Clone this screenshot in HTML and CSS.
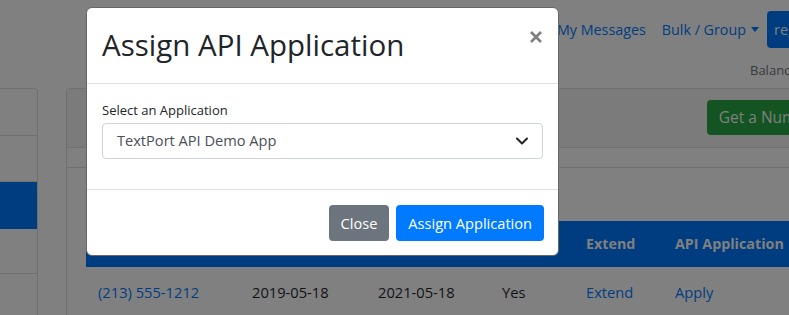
FILE: index.html
```html
<!DOCTYPE html>
<html lang="en">
<head>
    <meta charset="UTF-8">
    <meta name="viewport" content="width=device-width, initial-scale=1.0">
    <title>My Numbers - TextPort</title>
    <link rel="stylesheet" href="styles.css">
</head>
<body>

    <!-- Pagina de fondo (oscurecida mientras la ventana esta abierta) -->
    <div class="page">
        <header class="topbar">
            <nav class="nav">
                <a class="nav-link" href="#">My Messages</a>
                <a class="nav-link dropdown-toggle" href="#">Bulk / Group</a>
                <a class="btn page-primary nav-btn" href="#">register</a>
            </nav>
            <div class="balance">Balance: $25.00</div>
        </header>

        <div class="content">
            <!-- Menu lateral -->
            <div class="sidebar">
                <a class="list-item" href="#" aria-label="Account"></a>
                <a class="list-item" href="#" aria-label="Messages"></a>
                <a class="list-item active" href="#" aria-label="Numbers"></a>
                <a class="list-item" href="#" aria-label="Contacts"></a>
                <a class="list-item" href="#" aria-label="API"></a>
            </div>

            <!-- Tarjeta principal -->
            <div class="card">
                <div class="card-header">
                    <a class="btn page-success" href="#">Get a Number</a>
                </div>
                <div class="card-strip"></div>
                <div class="card-body">
                    <table class="table">
                        <thead>
                            <tr>
                                <th class="col-num">Number</th>
                                <th class="col-date">Created</th>
                                <th class="col-date2">Expires</th>
                                <th class="col-renew">Renew</th>
                                <th class="col-ext">Extend</th>
                                <th>API Application</th>
                            </tr>
                        </thead>
                        <tbody>
                            <tr>
                                <td><a href="#">(213) 555-1212</a></td>
                                <td>2019-05-18</td>
                                <td>2021-05-18</td>
                                <td>Yes</td>
                                <td><a href="#">Extend</a></td>
                                <td><a href="#">Apply</a></td>
                            </tr>
                        </tbody>
                    </table>
                </div>
            </div>
        </div>
    </div>

    <!-- Ventana de asignacion -->
    <div class="dialog-layer">
        <div class="dialog">
            <div class="dialog-header">
                <h3 class="dialog-title">Assign API Application</h3>
                <button class="close" type="button" aria-label="Close">
                    <svg width="12" height="12" viewBox="0 0 12 12">
                        <path d="M1 1 L11 11 M11 1 L1 11" stroke="#000" stroke-width="2.6" fill="none"/>
                    </svg>
                </button>
            </div>
            <div class="dialog-body">
                <label class="form-label">Select an Application</label>
                <div class="form-select">
                    <span>TextPort API Demo App</span>
                    <svg width="16" height="12" viewBox="0 0 16 12">
                        <path d="M3 3.5 L8 8.5 L13 3.5" stroke="#222" stroke-width="2" fill="none" stroke-linecap="round" stroke-linejoin="round"/>
                    </svg>
                </div>
            </div>
            <div class="dialog-footer">
                <button class="btn btn-secondary" type="button">Close</button>
                <button class="btn btn-primary" type="button">Assign Application</button>
            </div>
        </div>
    </div>

</body>
</html>
```

FILE: styles.css
```css
/* Estilos generales */
* {
    box-sizing: border-box;
}

body {
    position: relative;
    font-family: "Open Sans", "Noto Sans", sans-serif;
    font-size: 14.6px;
    line-height: 1.5;
    color: #212529;
    margin: 0;
    width: 789px;
    height: 315px;
    overflow: hidden;
}

a {
    text-decoration: none;
}

.btn {
    display: inline-block;
    border: none;
    border-radius: 4px;
    padding: 6px 12px;
    font-family: inherit;
    font-size: 14.6px;
    line-height: 24px;
    color: #fff;
    white-space: nowrap;
}

.btn-primary {
    background-color: #007bff;
}

.btn-secondary {
    background-color: #6c757d;
}

/* Pagina oscurecida detras de la ventana (colores al 50%) */
.page {
    height: 315px;
    background-color: #808080;
    color: #111315;
}

.page a {
    color: #003d80;
}

.page .btn {
    color: #808080;
}

.page-primary {
    background-color: #003d80;
}

.page-success {
    background-color: #145423;
}

/* Barra superior */
.topbar {
    height: 88px;
    padding-top: 11px;
}

.nav {
    display: flex;
    align-items: center;
    padding-left: 549px;
    white-space: nowrap;
}

.nav-link {
    padding: 0 8px;
    font-size: 14.3px;
    line-height: 24px;
}

.dropdown-toggle::after {
    content: "";
    display: inline-block;
    margin-left: 5px;
    vertical-align: 3px;
    border-top: 5px solid;
    border-left: 4px solid transparent;
    border-right: 4px solid transparent;
}

.nav-btn {
    margin-left: 0;
    height: 37px;
    padding: 6px 7px;
}

.balance {
    margin-top: 12px;
    padding-left: 750px;
    font-size: 13px;
    line-height: 21px;
    color: #363b3f;
    white-space: nowrap;
}

/* Contenido */
.content {
    display: flex;
    gap: 28px;
}

.sidebar {
    flex: 0 0 200px;
    margin-left: -162px;
    border: 1px solid #707070;
    border-radius: 4px;
    overflow: hidden;
}

.list-item {
    display: block;
    height: 47px;
    border-bottom: 1px solid #707070;
}

.list-item:nth-child(2) {
    height: 46px;
}

.list-item:nth-child(4) {
    height: 45px;
}

.page .list-item.active {
    background-color: #003d80;
    border-color: #003d80;
}

.card {
    flex: 0 0 790px;
    border: 1px solid #707070;
    border-radius: 4px;
}

.card-header {
    display: flex;
    justify-content: flex-end;
    padding: 11px 20px 12px;
    background-color: #7b7b7b;
    border-bottom: 1px solid #707070;
}

.card-header .btn {
    font-size: 15.5px;
    height: 35px;
    line-height: 23px;
    margin-right: 2px;
}

.card-strip {
    height: 20px;
    border-bottom: 1px solid #707070;
}

.card-body {
    padding: 53px 19px 20px;
}

.table {
    border-collapse: collapse;
    width: 100%;
    text-align: left;
}

.table th {
    background-color: #003d80;
    color: #808080;
    font-size: 14.3px;
    font-weight: bold;
    padding: 11px 12px;
    height: 46px;
}

.table td {
    font-size: 14.7px;
    padding: 14px 12px 10px;
    white-space: nowrap;
}

.col-num {
    width: 154px;
}

.col-date {
    width: 126px;
}

.col-date2 {
    width: 124px;
}

.col-renew {
    width: 84px;
}

.col-ext {
    width: 89px;
}

/* Ventana de asignacion */
.dialog-layer {
    position: absolute;
    top: 0;
    left: 0;
    z-index: 1050;
    padding: 7px 0 0 86px;
}

.dialog {
    width: 473px;
    background-color: #fff;
    border: 1px solid #666;
    border-radius: 6px;
}

.dialog-header {
    display: flex;
    align-items: flex-start;
    justify-content: space-between;
    padding: 16px 15px 17px;
    border-bottom: 1px solid #dee2e6;
}

.dialog-title {
    margin: 0;
    font-size: 29.5px;
    font-weight: 400;
    line-height: 42px;
}

.close {
    background: none;
    border: none;
    padding: 0;
    margin: 7px 1px 0 0;
    opacity: 0.5;
    cursor: pointer;
    display: flex;
}

.dialog-body {
    padding: 16px 15px 15px;
}

.form-label {
    display: block;
    font-size: 13px;
    line-height: 21px;
    margin-bottom: 2px;
}

.form-select {
    display: flex;
    align-items: center;
    justify-content: space-between;
    height: 36px;
    padding: 0 12px 0 14px;
    border: 1px solid #ced4da;
    border-radius: 4px;
    color: #495057;
    margin-bottom: 15px;
}

.dialog-footer {
    display: flex;
    justify-content: flex-end;
    gap: 7px;
    padding: 15px 14px 14px;
    border-top: 1px solid #dee2e6;
}

.dialog-footer .btn {
    height: 36px;
}
```
